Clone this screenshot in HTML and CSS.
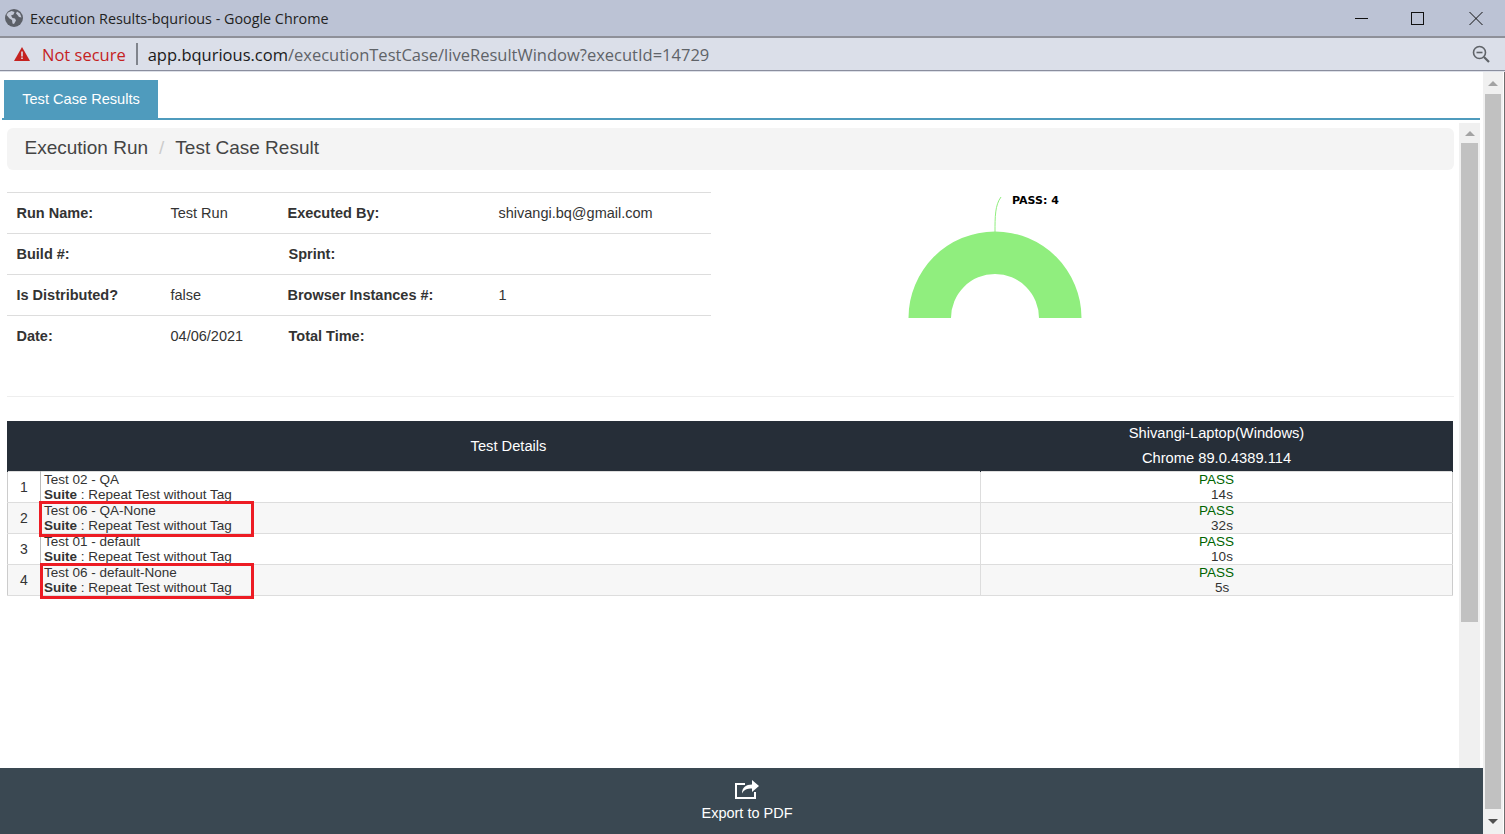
FILE: index.html
```html
<!DOCTYPE html>
<html lang="en">
<head>
    <meta charset="UTF-8">
    <meta name="viewport" content="width=device-width, initial-scale=1.0">
    <title>Execution Results-bqurious</title>
    <link rel="stylesheet" href="styles.css">
</head>
<body>
    <!-- Browser window chrome -->
    <div class="titlebar">
        <svg class="globe" width="18" height="18" viewBox="0 0 18 18">
            <circle cx="9" cy="9" r="9" fill="#5c6068"/>
            <path d="M3 3.500l3.500-1.500 3 1-1 2.500-2.500 1 1.500 2.500 2.500.5 1 2-2 3.500-1.500-.5-.5-3.500-2.500-1.500-3-3.500z" fill="#c3c8d6"/>
            <path d="M12 2.500l3 2 1.500 4-2.500-.5-1.500-2-1.500-1.500z" fill="#c3c8d6"/>
        </svg>
        <span class="window-title">Execution Results-bqurious - Google Chrome</span>
        <div class="window-controls">
            <svg class="win-min" width="14" height="14" viewBox="0 0 14 14"><path d="M0 7.500h13" stroke="#111" fill="none"/></svg>
            <svg width="14" height="14" viewBox="0 0 14 14"><rect x=".5" y="1.500" width="12" height="12" stroke="#111" stroke-width="1" fill="none"/></svg>
            <svg width="14" height="14" viewBox="0 0 14 14"><path d="M.5 1l13 13M13.500 1l-13 13" stroke="#111" fill="none"/></svg>
        </div>
    </div>
    <div class="addressbar">
        <svg class="warn" width="16" height="14" viewBox="0 0 16 14">
            <path d="M8 0l8 14H0z" fill="#c5221f"/>
            <path d="M7.200 4.500h1.600v5H7.200zM7.200 10.500h1.600v1.600H7.200z" fill="#dbdfe9"/>
        </svg>
        <span class="not-secure">Not secure</span>
        <span class="addr-sep"></span>
        <span class="url"><span class="url-host">app.bqurious.com</span>/executionTestCase/liveResultWindow?executId=14729</span>
        <svg class="zoom-icon" width="18" height="18" viewBox="0 0 18 18">
            <circle cx="7.500" cy="7.500" r="6" stroke="#5f6368" stroke-width="1.600" fill="none"/>
            <path d="M4.500 7.500h6" stroke="#5f6368" stroke-width="1.600"/>
            <path d="M12 12l5 5" stroke="#5f6368" stroke-width="2.200"/>
        </svg>
    </div>

    <div class="page">
        <div class="main">
            <div class="tabs">
                <a href="#" class="tab">Test Case Results</a>
            </div>

            <div class="body-row">
                <div class="content">
                    <div class="breadcrumb">
                        <span>Execution Run</span>
                        <span class="crumb-sep">/</span>
                        <span>Test Case Result</span>
                    </div>

                    <div class="summary">
                        <div class="info">
                            <div class="info-row">
                                <b>Run Name:</b><span>Test Run</span>
                                <b>Executed By:</b><span>shivangi.bq@gmail.com</span>
                            </div>
                            <div class="info-row">
                                <b>Build #:</b><span></span>
                                <b class="nudge">Sprint:</b><span></span>
                            </div>
                            <div class="info-row">
                                <b>Is Distributed?</b><span>false</span>
                                <b>Browser Instances #:</b><span>1</span>
                            </div>
                            <div class="info-row">
                                <b>Date:</b><span>04/06/2021</span>
                                <b class="nudge">Total Time:</b><span></span>
                            </div>
                        </div>
                        <svg class="chart" width="743" height="204" viewBox="0 0 743 204">
                            <path d="M284 40C284 25 284 13 290 5" stroke="#90ee7e" fill="none"/>
                            <path d="M197.500 126A86.500 86.500 0 0 1 370.500 126H328A44 44 0 0 0 240 126Z" fill="#90ee7e"/>
                            <text x="301" y="12" class="chart-label">PASS: 4</text>
                        </svg>
                    </div>

                    <div class="results-wrap">
                        <table class="results">
                            <colgroup>
                                <col class="col-num">
                                <col class="col-test">
                                <col class="col-result">
                            </colgroup>
                            <thead>
                                <tr>
                                    <th colspan="2" class="th-details">Test Details</th>
                                    <th class="th-env">Shivangi-Laptop(Windows)<br>Chrome 89.0.4389.114</th>
                                </tr>
                            </thead>
                            <tbody>
                                <tr>
                                    <td class="num">1</td>
                                    <td class="test">Test 02 - QA<br><b>Suite</b> : Repeat Test without Tag</td>
                                    <td class="result"><span class="pass">PASS</span><br><span class="time">14s</span></td>
                                </tr>
                                <tr>
                                    <td class="num">2</td>
                                    <td class="test">Test 06 - QA-None<br><b>Suite</b> : Repeat Test without Tag</td>
                                    <td class="result"><span class="pass">PASS</span><br><span class="time">32s</span></td>
                                </tr>
                                <tr>
                                    <td class="num">3</td>
                                    <td class="test">Test 01 - default<br><b>Suite</b> : Repeat Test without Tag</td>
                                    <td class="result"><span class="pass">PASS</span><br><span class="time">10s</span></td>
                                </tr>
                                <tr>
                                    <td class="num">4</td>
                                    <td class="test">Test 06 - default-None<br><b>Suite</b> : Repeat Test without Tag</td>
                                    <td class="result"><span class="pass">PASS</span><br><span class="time">5s</span></td>
                                </tr>
                            </tbody>
                        </table>
                        <!-- Red markup drawn over the screenshot -->
                        <div class="mark mark-one"></div>
                        <div class="mark mark-two"></div>
                    </div>
                </div>

                <div class="scrollbar scrollbar-inner">
                    <div class="arrow-btn"><span class="arrow-up"></span></div>
                    <div class="thumb"></div>
                </div>
            </div>

            <div class="export">
                <svg width="26" height="19" viewBox="0 0 26 19">
                    <path d="M11 4H2v14h19v-6" stroke="#fff" stroke-width="2" fill="none"/>
                    <path d="M18 0l7 6-7 6V8.500c-5 0-8 1-10 5 0-6 4-9 10-9z" fill="#fff"/>
                </svg>
                <span>Export to PDF</span>
            </div>
        </div>

        <div class="scrollbar scrollbar-outer">
            <div class="arrow-btn"><span class="arrow-up"></span></div>
            <div class="thumb"></div>
            <div class="arrow-btn arrow-btn-bottom"><span class="arrow-down"></span></div>
        </div>
    </div>
</body>
</html>
```

FILE: styles.css
```css
html, body {
    height: 100%;
}

body {
    margin: 0;
    font-family: "Liberation Sans", Arial, sans-serif;
    font-size: 14px;
    color: #333;
    background: #fff;
    display: flex;
    flex-direction: column;
    height: 834px;
    overflow: hidden;
}

/* Window chrome */
.titlebar {
    height: 36px;
    flex: none;
    display: flex;
    align-items: center;
    padding-left: 5px;
    background: #bcc3d5;
    border-bottom: 2px solid #8e9099;
}

.globe {
    margin-right: 7px;
}

.window-title {
    font-family: "Open Sans", sans-serif;
    font-size: 14.350px;
    color: #222;
}

.window-controls {
    margin-left: auto;
    display: flex;
    gap: 44px;
    padding-right: 22px;
}

.win-min {
    margin-right: -2px;
}

.addressbar {
    height: 32px;
    flex: none;
    display: flex;
    align-items: center;
    padding-left: 14px;
    background: #dbdfe9;
    border-bottom: 1px solid #8a8e9e;
    box-shadow: 0 1px 0 #dde0e8;
    font-family: "Open Sans", sans-serif;
    font-size: 16.500px;
}

.warn {
    margin-right: 12px;
}

.not-secure {
    color: #c5221f;
}

.addr-sep {
    width: 2px;
    height: 22px;
    margin: 0 10px;
    background: #80848c;
}

.url {
    color: #5f6368;
}

.url-host {
    color: #1a1a1a;
}

.zoom-icon {
    margin-left: auto;
    margin-right: 15px;
}

/* Page under the chrome */
.page {
    flex: 1;
    display: flex;
    min-height: 0;
    margin-top: 1px;
    border-right: 1px solid #6e6e6e;
}

.main {
    width: 1483px;
    flex: none;
    display: flex;
    flex-direction: column;
}

.tabs {
    flex: none;
    height: 38px;
    margin: 8px 3px 0 2px;
    padding-left: 2px;
    border-bottom: 2px solid #4f9bbd;
}

.tab {
    display: block;
    box-sizing: border-box;
    width: 154px;
    height: 38px;
    line-height: 39px;
    text-align: center;
    background: #4f9bbd;
    color: #fff;
    text-decoration: none;
    font-size: 14.600px;
}

.body-row {
    flex: 1;
    min-height: 0;
    display: flex;
    margin-top: 3px;
    padding-right: 3px;
}

.content {
    flex: 1;
    min-width: 0;
    padding: 5px 5px 0 7px;
}

.breadcrumb {
    height: 42px;
    box-sizing: border-box;
    display: flex;
    align-items: center;
    gap: 11px;
    padding: 0 0 3px 17.500px;
    background: #f4f4f4;
    border-radius: 6px;
    font-size: 19px;
    color: #444;
}

.crumb-sep {
    color: #ccc;
}

.summary {
    display: flex;
    height: 204px;
    margin-top: 22px;
    border-bottom: 1px solid #eee;
}

.info {
    width: 704px;
    flex: none;
    font-size: 14.500px;
}

.info-row {
    display: grid;
    grid-template-columns: 154px 117px 211px 1fr;
    height: 41px;
    box-sizing: border-box;
    align-items: center;
    padding-left: 9.500px;
    border-top: 1px solid #ddd;
}

.nudge {
    margin-left: 1px;
}

.chart {
    flex: none;
}

.chart-label {
    font-family: "DejaVu Sans", sans-serif;
    font-size: 11px;
    font-weight: 700;
    fill: #000;
}

/* Results table */
.results-wrap {
    position: relative;
    margin-top: 24px;
}

.results {
    width: 1446px;
    table-layout: fixed;
    border-collapse: collapse;
    font-size: 13.500px;
}

.col-num {
    width: 33px;
}

.col-test {
    width: 940px;
}

.results th {
    height: 50px;
    padding: 0;
    border-style: solid;
    border-color: #262e38;
    border-width: 0 1px;
    background: #262e38;
    color: #fff;
    font-weight: 400;
    font-size: 14.700px;
}

.results th.th-details {
    padding-left: 29px;
}

.th-env {
    line-height: 25px;
}

.results td {
    height: 30px;
    padding: 0;
    line-height: 15px;
    border: 1px solid #ddd;
    overflow: hidden;
}

.results tbody tr:nth-child(even) td {
    background: #f7f7f7;
}

.results td.num {
    text-align: center;
    font-size: 14px;
    border-left-color: #ccc;
    border-right-color: #bbb;
}

.results td.test {
    padding-left: 3px;
}

.results td.result {
    text-align: center;
    border-left-color: #999;
    border-right-color: #ccc;
}

.pass {
    color: #006400;
}

.time {
    margin-left: 11px;
}

.mark {
    position: absolute;
    box-sizing: border-box;
    border: 3px solid #ed1c24;
}

.mark-one {
    left: 32px;
    top: 80px;
    width: 215px;
    height: 36px;
}

.mark-two {
    left: 33px;
    top: 142px;
    width: 214px;
    height: 36px;
}

/* Scrollbars */
.scrollbar {
    flex: none;
    box-sizing: border-box;
    display: flex;
    flex-direction: column;
    background: #f0f0f0;
    padding: 0 2px;
}

.scrollbar-inner {
    width: 21px;
}

.scrollbar-outer {
    width: 20px;
}

.arrow-btn {
    flex: none;
    height: 20px;
    display: flex;
    align-items: center;
    justify-content: center;
}

.scrollbar-outer .arrow-btn {
    height: 22px;
}

.scrollbar-outer .arrow-btn-bottom {
    height: 25px;
}

.arrow-up {
    border: 5px solid transparent;
    border-top: 0;
    border-bottom: 5px solid #a3a3a3;
}

.arrow-down {
    border: 5px solid transparent;
    border-bottom: 0;
    border-top: 5px solid #505050;
}

.scrollbar .thumb {
    background: #c1c1c1;
}

.scrollbar-inner .thumb {
    height: 479px;
}

.scrollbar-outer .thumb {
    flex: 1;
}

/* Footer bar */
.export {
    flex: none;
    height: 66px;
    box-sizing: border-box;
    display: flex;
    flex-direction: column;
    align-items: center;
    padding: 12px 0 0 11px;
    background: #3a4852;
    color: #fff;
    font-size: 14.500px;
}

.export span {
    margin-top: 6px;
}
```
